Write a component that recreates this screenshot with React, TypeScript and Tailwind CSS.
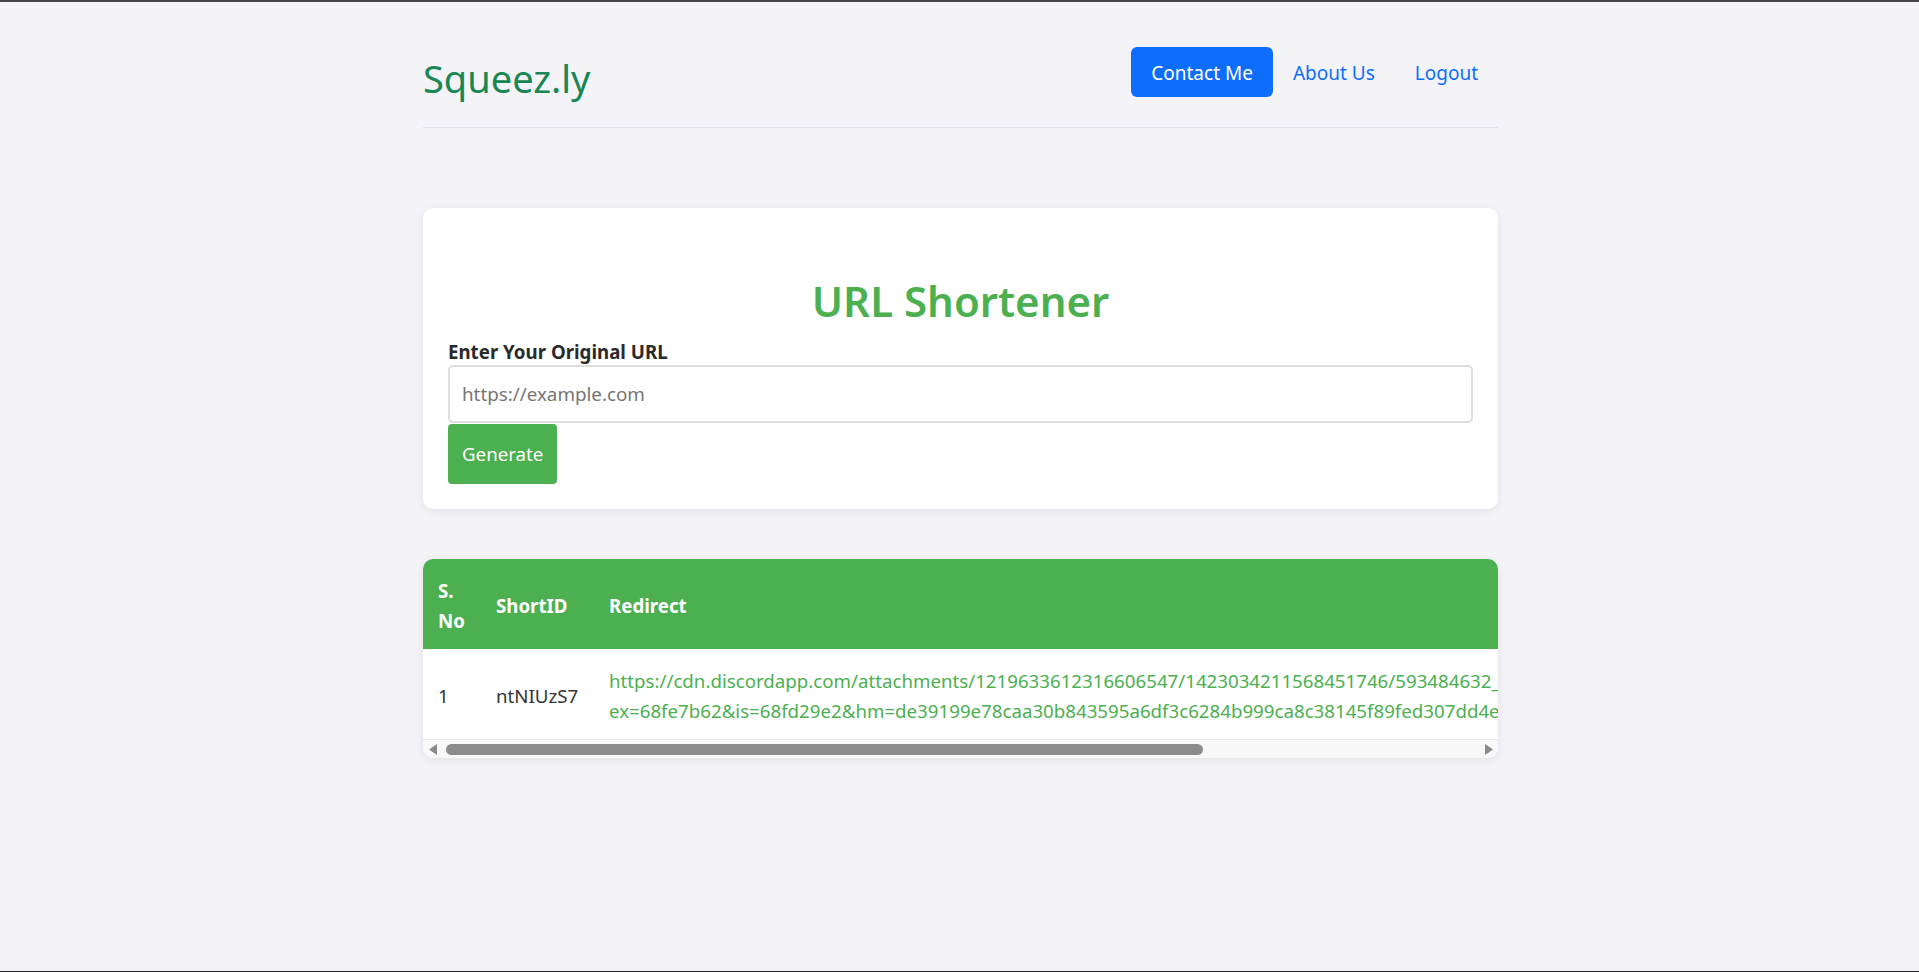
import React from 'react';

const links = [
  {
    id: 1,
    shortId: 'ntNIUzS7',
    line1:
      'https://cdn.discordapp.com/attachments/1219633612316606547/1423034211568451746/593484632_122146236786624881_5736027453618214402_n.jpg?',
    line2:
      'ex=68fe7b62&is=68fd29e2&hm=de39199e78caa30b843595a6df3c6284b999ca8c38145f89fed307dd4e1a2f0b&',
  },
];

function Header() {
  return (
    <header className="flex justify-between items-start pt-[45px] pb-[25px] border-b border-[#dee2e6]">
      <a className="mt-[7px] text-[38px] leading-[48px] text-[#198754]">Squeez.ly</a>
      <nav className="flex">
        <a className="h-[50px] px-5 pt-[2px] flex items-center rounded-[6px] bg-[#0d6efd] text-white text-[19px]">
          Contact Me
        </a>
        <a className="h-[50px] px-5 pt-[2px] flex items-center text-[#0d6efd] text-[19px]">About Us</a>
        <a className="h-[50px] px-5 pt-[2px] flex items-center text-[#0d6efd] text-[19px]">Logout</a>
      </nav>
    </header>
  );
}

function ShortenForm() {
  return (
    <div className="mt-[80px] bg-white rounded-[10px] shadow-[0_2px_10px_rgba(0,0,0,0.08)] p-[25px]">
      <h1 className="mt-[43px] text-center text-[42px] leading-[50px] font-semibold text-[#4caf50]">
        URL Shortener
      </h1>
      <label className="block mt-[12px] text-[18.7px] leading-[27px] font-bold text-[#2a2a2a]">
        Enter Your Original URL
      </label>
      <input
        type="text"
        placeholder="https://example.com"
        className="block w-full h-[58px] border-2 border-[#dddddd] rounded-[5px] px-[12px] text-[18.8px] text-[#333] placeholder:text-[#757575] outline-none"
      />
      <button className="mt-[1px] h-[60px] px-[14px] rounded-[4px] bg-[#4caf50] text-white text-[18.7px]">
        Generate
      </button>
    </div>
  );
}

function FakeScrollbar() {
  return (
    <div className="h-[19px] bg-[#f8f8f8] border-t border-[#e6e6e6] flex items-center px-[6px]">
      <svg width="8" height="11" viewBox="0 0 8 11">
        <path d="M8 0 L0 5.5 L8 11 Z" fill="#8a8a8a" />
      </svg>
      <div className="ml-[9px] w-[757px] h-[11px] rounded-full bg-[#8c8c8c]" />
      <div className="flex-1" />
      <svg width="8" height="11" viewBox="0 0 8 11" className="mr-[-1px]">
        <path d="M0 0 L8 5.5 L0 11 Z" fill="#8a8a8a" />
      </svg>
    </div>
  );
}

function LinksTable() {
  return (
    <div className="mt-[50px] bg-white rounded-[10px] overflow-hidden shadow-[0_2px_10px_rgba(0,0,0,0.08)]">
      <div className="overflow-hidden">
        <table className="w-[1483px] table-fixed border-collapse text-[18.7px] leading-[30px]">
          <thead>
            <tr className="bg-[#4caf50] text-white text-left">
              <th className="w-[58px] px-[15px] pt-[17px] pb-[13px] font-bold align-middle">S. No</th>
              <th className="w-[113px] px-[15px] pt-[17px] pb-[13px] font-bold align-middle">ShortID</th>
              <th className="px-[15px] pt-[17px] pb-[13px] font-bold align-middle">Redirect</th>
            </tr>
          </thead>
          <tbody>
            {links.map((l) => (
              <tr key={l.id} className="text-[#333]">
                <td className="px-[15px] pt-[17px] pb-[13px] align-middle">{l.id}</td>
                <td className="px-[15px] pt-[17px] pb-[13px] align-middle whitespace-nowrap">{l.shortId}</td>
                <td className="px-[15px] pt-[17px] pb-[13px] align-middle whitespace-nowrap">
                  <a className="text-[#4caf50]">
                    {l.line1}
                    <br />
                    {l.line2}
                  </a>
                </td>
              </tr>
            ))}
          </tbody>
        </table>
      </div>
      <FakeScrollbar />
    </div>
  );
}

export default function App() {
  return (
    <div className="h-[972px] bg-[#f4f4f8] border-t-2 border-t-[#454545] border-b border-b-[#1f1f1f] font-['Noto_Sans',sans-serif]">
      <div className="w-[1077px] mx-auto pl-[2px]">
        <Header />
        <ShortenForm />
        <LinksTable />
      </div>
    </div>
  );
}
